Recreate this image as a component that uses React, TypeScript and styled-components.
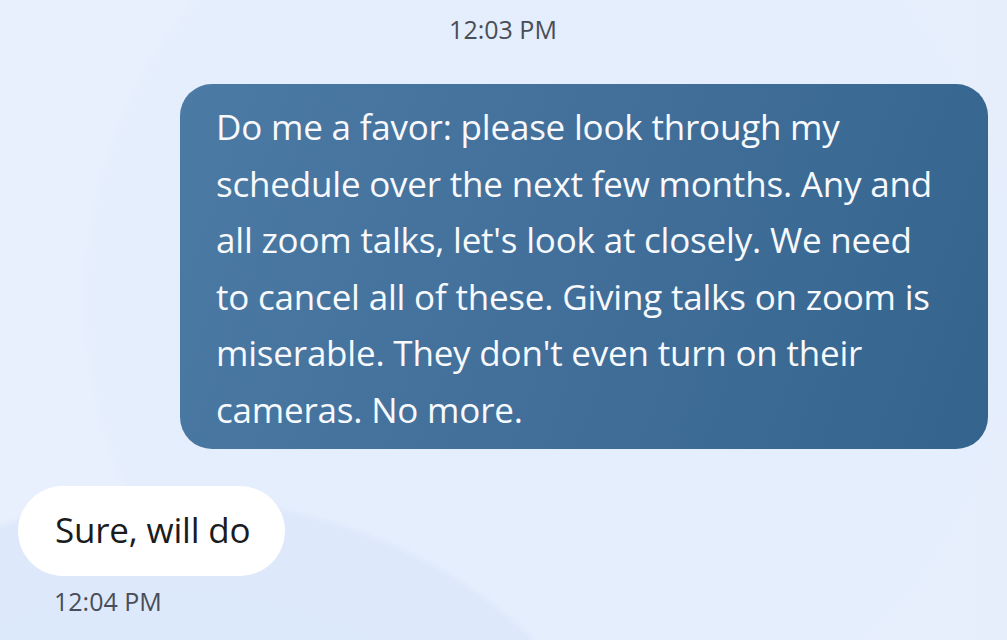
import styled, { createGlobalStyle } from 'styled-components';

const GlobalStyle = createGlobalStyle`
  html, body {
    margin: 0;
    padding: 0;
  }
  body {
    font-family: "Open Sans", Roboto, "Liberation Sans", sans-serif;
    background: #e5eefc;
  }
`;

// wallpaper: one big pale circle and a darker blob in the bottom-left corner
const Screen = styled.div`
  width: 1007px;
  height: 640px;
  overflow: hidden;
  box-sizing: border-box;
  padding: 14px 19px 0 18px;
  display: flex;
  flex-direction: column;
  background:
    radial-gradient(ellipse 480px 400px at 170px 895px, #dce8fb 0%, #dde8fb 98%, rgba(221, 232, 251, 0) 100%),
    radial-gradient(circle 470px at 550px 300px, #e4edfc 0%, #e5eefc 98%, rgba(229, 238, 252, 0) 100%),
    linear-gradient(90deg, #e9f0fd 0%, #e6eefc 100%);
`;

const Stamp = styled.div<{ align: 'center' | 'left' }>`
  font-size: 25px;
  line-height: 30px;
  color: #484d56;
  text-align: ${(p) => p.align};
  padding-left: ${(p) => (p.align === 'left' ? '36px' : '0')};
`;

const Row = styled.div<{ mine: boolean }>`
  display: flex;
  justify-content: ${(p) => (p.mine ? 'flex-end' : 'flex-start')};
`;

const SentBubble = styled.div`
  margin-top: 40px;
  width: 808px;
  box-sizing: border-box;
  padding: 15px 42px 10px 36px;
  border-radius: 32px;
  background: linear-gradient(110deg, #4b7aa5 0%, #416f9a 50%, #34648d 100%);
  color: #f7f9fc;
  font-size: 35px;
  line-height: 56.6px;
  letter-spacing: -0.2px;
`;

const ReceivedBubble = styled.div`
  margin-top: 37px;
  height: 90px;
  box-sizing: border-box;
  padding: 0 35px 3px 37px;
  display: flex;
  align-items: center;
  border-radius: 45px;
  background: #ffffff;
  color: #1b1c1e;
  font-size: 35px;
  letter-spacing: -0.2px;
`;

const Footer = styled.div`
  margin-top: 10px;
`;

export default function App() {
  return (
    <>
      <GlobalStyle />
      <Screen>
        <Stamp align="center">12:03 PM</Stamp>
        <Row mine>
          <SentBubble>
            Do me a favor: please look through my schedule over the next few
            months. Any and all zoom talks, let's look at closely. We need to
            cancel all of these. Giving talks on zoom is miserable. They don't
            even turn on their cameras. No more.
          </SentBubble>
        </Row>
        <Row mine={false}>
          <ReceivedBubble>Sure, will do</ReceivedBubble>
        </Row>
        <Footer>
          <Stamp align="left">12:04 PM</Stamp>
        </Footer>
      </Screen>
    </>
  );
}
